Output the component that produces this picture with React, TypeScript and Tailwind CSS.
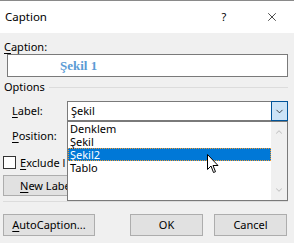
import { X, ChevronDown, ChevronUp } from 'lucide-react'

const items = ['Denklem', 'Şekil', 'Şekil2', 'Tablo']

function Btn({ label, u, w, ml = 0 }: { label: string; u: string; w: string; ml?: number }) {
  return (
    <div
      className={`${w} h-[22px] flex items-center justify-center border border-[#adadad] bg-[#e1e1e1] text-black`}
      style={ml ? { marginLeft: ml } : undefined}
    >
      {u ? (
        <span>
          <span className="underline underline-offset-2">{u}</span>
          {label}
        </span>
      ) : (
        label
      )}
    </div>
  )
}

export default function App() {
  return (
    <div
      className="relative w-[294px] h-[243px] overflow-hidden bg-[#f0f0f0] text-[11px] leading-[14px] text-black"
      style={{ fontFamily: '"Noto Sans", "Segoe UI", sans-serif' }}
    >
      {/* ── Title bar ─────────────────── */}
      <div className="h-[33px] bg-white border-t border-[#8a8a8a] flex items-center">
        <span className="pl-[5px] text-[11.5px] flex-1">Caption</span>
        <span className="w-[10px] text-center mr-[36px]">?</span>
        <X size={14} strokeWidth={1.2} className="mr-[15px]" />
      </div>

      {/* ── Caption ───────────────────── */}
      <div className="pl-[4px] mt-[7px] h-[14px]">
        <span className="underline underline-offset-2">C</span>aption:
      </div>
      <div className="ml-[7px] w-[281px] h-[23px] bg-white border border-[#7a7a7a] flex items-center pl-[52px]">
        <span
          className="text-[13px] font-bold text-[#5b9bd5]"
          style={{ fontFamily: '"Liberation Serif", serif' }}
        >
          Şekil 1
        </span>
      </div>

      {/* ── Options ───────────────────── */}
      <div className="mt-[3px] h-[14px] flex items-center">
        <span className="pl-[4px]">Options</span>
        <div className="ml-[4px] flex-1 mr-[6px] h-px bg-[#dcdcdc]" />
      </div>

      <div className="mt-[7px] h-[20px] flex items-center">
        <div className="pl-[12px] w-[67px]">
          <span className="underline underline-offset-2">L</span>abel:
        </div>
        <div className="w-[221px] h-[20px] bg-white border border-[#7a7a7a] flex items-center">
          <span className="pl-[3px] flex-1">Şekil</span>
          <div className="w-[17px] h-[20px] -mr-px border border-[#005499] bg-[#cce4f7] flex items-center justify-center">
            <ChevronDown size={11} strokeWidth={1.5} />
          </div>
        </div>
      </div>

      <div className="mt-[5px] h-[20px] flex items-center">
        <div className="pl-[12px] w-[67px]">
          <span className="underline underline-offset-2">P</span>osition:
        </div>
      </div>

      {/* left column clipped by the open list */}
      <div className="w-[67px] overflow-hidden whitespace-nowrap">
        <div className="mt-[10px] h-[13px] flex items-center">
          <div className="ml-[3px] shrink-0 w-[13px] h-[13px] bg-white border border-[#333]" />
          <span className="ml-[4px]">
            <span className="underline underline-offset-2">E</span>xclude l
          </span>
        </div>

        <div className="mt-[6px] ml-[3px] w-[120px] h-[21px] flex items-center pl-[16px] border border-[#adadad] bg-[#e1e1e1]">
          <span>
            <span className="underline underline-offset-2">N</span>ew Labe
          </span>
        </div>
      </div>

      <div className="mt-[5px] ml-[3px] mr-[6px] h-px bg-[#dcdcdc]" />

      <div className="mt-[12px] ml-[3px] flex">
        <Btn w="w-[92px]" u="A" label="utoCaption..." />
        <Btn w="w-[73px]" u="" label="OK" ml={35} />
        <Btn w="w-[73px]" u="" label="Cancel" ml={11} />
      </div>

      {/* ── Dropdown list (over content) ── */}
      <div className="absolute left-[67px] top-[121px] w-[221px] h-[80px] bg-white border border-[#7a7a7a] flex">
        <div className="flex-1">
          {items.map((it) => (
            <div
              key={it}
              className={
                it === 'Şekil2'
                  ? 'h-[13px] leading-[13px] pl-[2px] flex items-center bg-[#0078d7] text-white outline-1 outline-dotted outline-[#f09a30] -outline-offset-1'
                  : 'h-[13px] leading-[13px] pl-[2px] flex items-center'
              }
            >
              {it}
            </div>
          ))}
        </div>
        <div className="w-[16px] bg-[#f0f0f0] flex flex-col items-center justify-between py-[5px] text-[#c4c4c4]">
          <ChevronUp size={10} strokeWidth={2.5} />
          <ChevronDown size={10} strokeWidth={2.5} />
        </div>
      </div>

      {/* ── Mouse cursor ── */}
      <svg className="absolute left-[207px] top-[154px]" width="13" height="20" viewBox="0 0 13 20">
        <path
          d="M0.5 0.5 L0.5 15.5 L4 12 L6.5 18.5 L8.5 17.7 L6 11.5 L11 11.5 Z"
          fill="white"
          stroke="black"
          strokeWidth="1"
          strokeLinejoin="miter"
        />
      </svg>
    </div>
  )
}
